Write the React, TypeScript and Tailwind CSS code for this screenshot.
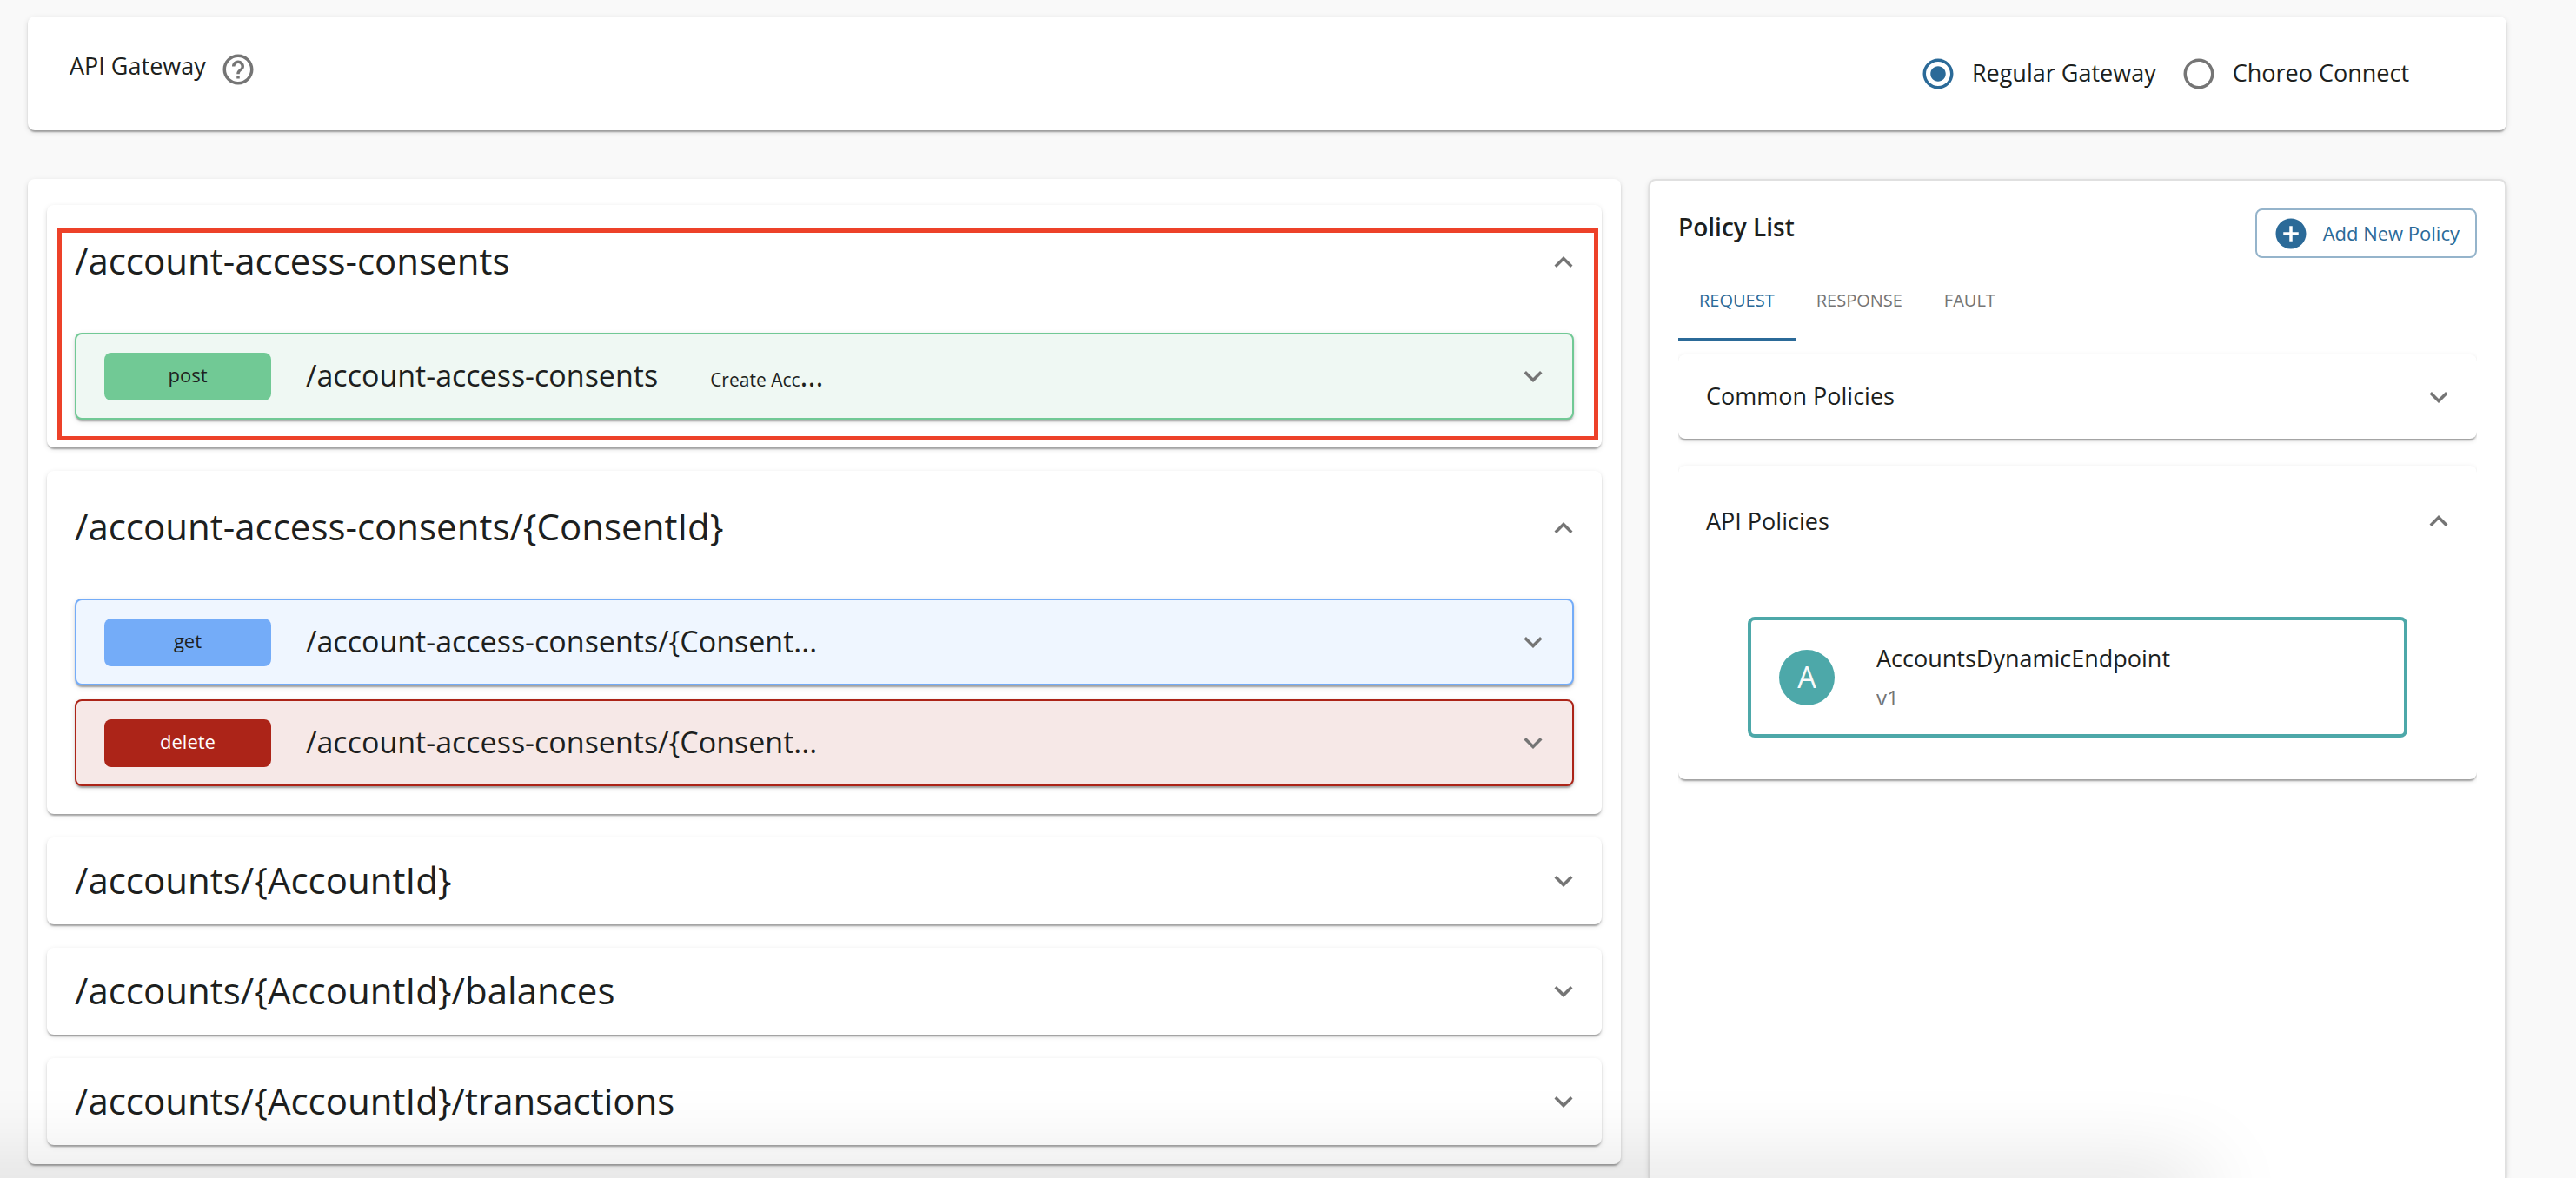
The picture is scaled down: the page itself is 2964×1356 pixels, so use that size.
import { useState, type ReactNode } from "react";
import {
  MdAddCircle,
  MdExpandLess,
  MdExpandMore,
  MdHelpOutline,
  MdRadioButtonChecked,
  MdRadioButtonUnchecked,
} from "react-icons/md";

const elevation =
  "shadow-[0_4px_2px_-2px_rgba(0,0,0,0.2),0_2px_2px_0_rgba(0,0,0,0.14),0_2px_6px_0_rgba(0,0,0,0.12)]";

type Verb = "post" | "get" | "delete";

const rowStyle: Record<Verb, string> = {
  post: "border-[#71c995] bg-[#eff8f3]",
  get: "border-[#74acf8] bg-[#eff6ff]",
  delete: "border-[#ac2418] bg-[#f6e8e7]",
};

const badgeStyle: Record<Verb, string> = {
  post: "bg-[#71c995] text-[#1d1f20]",
  get: "bg-[#74acf8] text-[#1d1f20]",
  delete: "bg-[#ac2418] text-white",
};

interface Operation {
  verb: Verb;
  path: string;
  summary?: string;
}

interface Group {
  name: string;
  operations: Operation[];
  open: boolean;
  highlighted?: boolean;
}

const groups: Group[] = [
  {
    name: "/account-access-consents",
    operations: [
      { verb: "post", path: "/account-access-consents", summary: "Create Acc" },
    ],
    open: true,
    highlighted: true,
  },
  {
    name: "/account-access-consents/{ConsentId}",
    operations: [
      { verb: "get", path: "/account-access-consents/{Consent..." },
      { verb: "delete", path: "/account-access-consents/{Consent..." },
    ],
    open: true,
  },
  { name: "/accounts/{AccountId}", operations: [], open: false },
  { name: "/accounts/{AccountId}/balances", operations: [], open: false },
  { name: "/accounts/{AccountId}/transactions", operations: [], open: false },
];

function Chevron({ up }: { up?: boolean }) {
  const Icon = up ? MdExpandLess : MdExpandMore;
  return <Icon className="size-[42px] shrink-0 text-[#757575]" aria-hidden />;
}

function GatewayOption({
  label,
  checked,
  onSelect,
}: {
  label: string;
  checked: boolean;
  onSelect: () => void;
}) {
  const Icon = checked ? MdRadioButtonChecked : MdRadioButtonUnchecked;
  return (
    <label className="flex cursor-pointer items-center gap-[18px]">
      <span className="grid">
        <input
          type="radio"
          name="gateway"
          checked={checked}
          onChange={onSelect}
          className="size-[42px] appearance-none [grid-area:1/1]"
        />
        <Icon
          className={`pointer-events-none size-[42px] [grid-area:1/1] ${
            checked ? "text-[#2b6a98]" : "text-[#757575]"
          }`}
          aria-hidden
        />
      </span>
      {label}
    </label>
  );
}

function OperationRow({ verb, path, summary }: Operation) {
  return (
    <button
      type="button"
      className={`flex h-[100px] w-full items-center rounded-lg border-2 pr-6 pl-8 text-left ${elevation} ${rowStyle[verb]}`}
    >
      <span
        className={`flex h-[55px] w-48 items-center justify-center rounded-lg pb-1 text-[22px] ${badgeStyle[verb]}`}
      >
        {verb}
      </span>
      <span className="ml-10 pb-0.5 text-[34px]">{path}</span>
      {summary && (
        <span className="ml-[60px] pb-0.5 text-[34px]">
          <span className="text-[21px]">{summary}</span>...
        </span>
      )}
      <span className="ml-auto">
        <Chevron />
      </span>
    </button>
  );
}

function GroupPanel({ group }: { group: Group }) {
  const [open, setOpen] = useState(group.open);
  return (
    <section className={`relative rounded-lg bg-white ${elevation}`}>
      <h2>
        <button
          type="button"
          aria-expanded={open}
          onClick={() => setOpen(!open)}
          className={`flex w-full items-center justify-between pr-[23px] pl-8 text-left text-[42px] ${
            open ? "h-[131px]" : "h-[100px]"
          }`}
        >
          <span className="pb-1">{group.name}</span>
          <Chevron up={open} />
        </button>
      </h2>
      {open && (
        <div className="flex flex-col gap-4 px-8 pt-4 pb-8">
          {group.operations.map((op) => (
            <OperationRow key={op.verb} {...op} />
          ))}
        </div>
      )}
      {group.highlighted && (
        <div className="pointer-events-none absolute top-[27px] right-1 bottom-2 left-3 border-[5px] border-[#ed4129]" />
      )}
    </section>
  );
}

function PolicySection({
  title,
  defaultOpen,
  children,
}: {
  title: string;
  defaultOpen?: boolean;
  children?: ReactNode;
}) {
  const [open, setOpen] = useState(!!defaultOpen);
  return (
    <section className={`rounded-lg bg-white ${elevation}`}>
      <h3>
        <button
          type="button"
          aria-expanded={open}
          onClick={() => setOpen(!open)}
          className={`flex w-full items-center justify-between pr-[23px] pl-8 text-left ${
            open ? "h-32" : "h-[97px]"
          }`}
        >
          {title}
          <Chevron up={open} />
        </button>
      </h3>
      {open && <div className="px-20 pt-[46px] pb-12">{children}</div>}
    </section>
  );
}

const tabs = ["REQUEST", "RESPONSE", "FAULT"];

export default function App() {
  const [gateway, setGateway] = useState("regular");
  const [tab, setTab] = useState("REQUEST");

  return (
    <main className="relative flex min-h-screen flex-col overflow-hidden bg-[#f9f9f9] pt-[19px] pr-20 pl-8 font-['Open_Sans',sans-serif] text-[27px] text-[#1d1f20]">
      <section
        className={`flex h-[131px] items-center justify-between rounded-lg bg-white pr-28 pl-12 ${elevation}`}
      >
        <div className="flex items-center gap-4 pb-[10px]">
          <h1 className="pb-1.5">API Gateway</h1>
          <button type="button" aria-label="Help">
            <MdHelpOutline className="size-[42px] text-[#757575]" />
          </button>
        </div>
        <fieldset className="flex items-center gap-7">
          <GatewayOption
            label="Regular Gateway"
            checked={gateway === "regular"}
            onSelect={() => setGateway("regular")}
          />
          <GatewayOption
            label="Choreo Connect"
            checked={gateway === "choreo"}
            onSelect={() => setGateway("choreo")}
          />
        </fieldset>
      </section>

      <div className="mt-14 grid flex-1 grid-cols-[65fr_35fr] gap-8">
        <div
          className={`mb-4 flex flex-col gap-[27px] self-start rounded-lg bg-white px-[22px] pt-[30px] pb-[22px] ${elevation}`}
        >
          {groups.map((group) => (
            <GroupPanel key={group.name} group={group} />
          ))}
        </div>

        <aside
          className={`rounded-t-lg border-2 border-b-0 border-[#e0e0e0] bg-white px-8 pt-8 ${elevation}`}
        >
          <div className="flex items-start justify-between">
            <h2 className="text-[28px] font-semibold">Policy List</h2>
            <button
              type="button"
              className="flex h-[57px] items-center gap-4 rounded-lg border-2 border-[#95b4cb] px-[18px] text-[22px] text-[#2b6a98]"
            >
              <MdAddCircle className="size-[42px]" aria-hidden />
              Add New Policy
            </button>
          </div>

          <div role="tablist" className="flex">
            {tabs.map((name) => (
              <button
                key={name}
                type="button"
                role="tab"
                aria-selected={tab === name}
                onClick={() => setTab(name)}
                className={`h-24 border-b-4 px-6 pt-1.5 text-[20px] ${
                  tab === name
                    ? "border-[#2b6a98] text-[#2b6a98]"
                    : "border-transparent text-[#757575]"
                }`}
              >
                {name}
              </button>
            ))}
          </div>

          <div className="flex flex-col gap-[31px] overflow-hidden pt-[15px] pb-4">
            <PolicySection title="Common Policies" />
            <PolicySection title="API Policies" defaultOpen>
              <div className="flex h-[139px] items-center gap-12 rounded-lg border-4 border-[#4da8a9] px-8">
                <span className="flex size-16 items-center justify-center rounded-full bg-[#4da8a9] text-[34px] text-[#fafafa]">
                  A
                </span>
                <div>
                  <p className="leading-[46px]">AccountsDynamicEndpoint</p>
                  <p className="text-[24px] leading-[44px] text-[#757575]">v1</p>
                </div>
              </div>
            </PolicySection>
          </div>
        </aside>
      </div>

      <div className="pointer-events-none absolute -bottom-10 -left-40 h-10 w-[91%] rounded-3xl shadow-[0_0_100px_rgba(0,0,0,0.22)]" />
    </main>
  );
}
